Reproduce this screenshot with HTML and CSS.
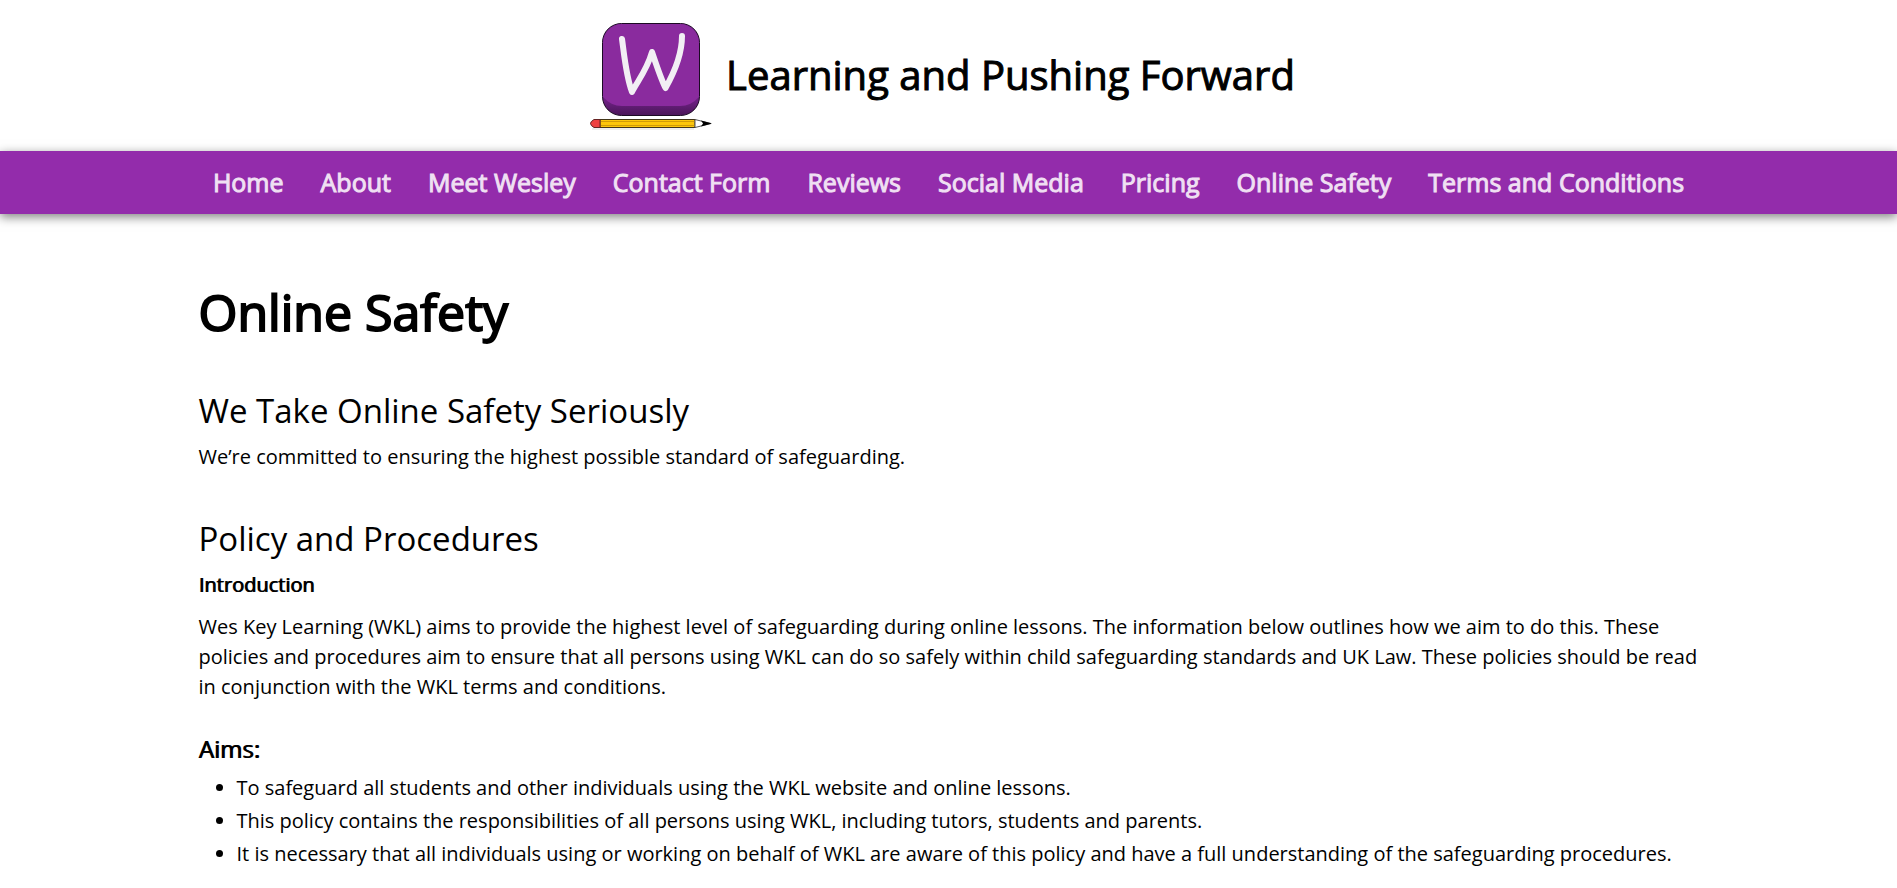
FILE: index.html
```html
<!DOCTYPE html>
<html lang="en">
<head>
<meta charset="utf-8">
<title>Online Safety - Wes Key Learning</title>
<link rel="stylesheet" href="styles.css">
</head>
<body>
<header class="site-header">
  <svg class="logo" viewBox="0 0 124 110" role="img" aria-label="Wes Key Learning logo">
    <defs>
      <linearGradient id="base" x1="0" y1="0" x2="0" y2="1">
        <stop offset="0.85" stop-color="#6b2080"/>
        <stop offset="1" stop-color="#4a1558"/>
      </linearGradient>
      <clipPath id="tile"><rect x="13" y="3" width="96" height="91" rx="19"/></clipPath>
    </defs>
    <rect x="12.500" y="2.500" width="97" height="92" rx="19" fill="url(#base)" stroke="#1c0a24" stroke-width="1"/>
    <path clip-path="url(#tile)" d="M13 0H109V76Q101 85 90 85H32Q21 85 13 76Z" fill="#8a2b9e"/>
    <path d="M32 18C34 32 36 55 42 71C47 61 57 49 62 31C66 43 71 58 75.500 67C84 52 92 35 92 15" fill="none" stroke="#f2eff4" stroke-width="6" stroke-linecap="round" stroke-linejoin="round"/>
    <path d="M2 108H104" stroke="#ddd" stroke-width="1"/>
    <path d="M10 98.500H105V106.500H10Z" fill="#fcc60a" stroke="#423619" stroke-width="1"/>
    <path d="M11 100.500H105M11 104.500H105" stroke="#cf9a08" stroke-width="1"/>
    <path d="M10 98.500H4Q-3 102.500 4 106.500H10Z" fill="#ee4040" stroke="#652323" stroke-width="1"/>
    <path d="M105 98.500L121 102.500L105 106.500Z" fill="#fff" stroke="#555" stroke-width="1"/>
    <path d="M111 99.500L122 102.500L111 105.500L113 102.500Z" fill="#000"/>
  </svg>
  <p class="tagline">Learning and Pushing Forward</p>
</header>
<nav class="site-nav" aria-label="Main">
  <a href="#">Home</a>
  <a href="#">About</a>
  <a href="#">Meet Wesley</a>
  <a href="#">Contact Form</a>
  <a href="#">Reviews</a>
  <a href="#">Social Media</a>
  <a href="#">Pricing</a>
  <a href="#">Online Safety</a>
  <a href="#">Terms and Conditions</a>
</nav>
<main class="content">
  <h1>Online Safety</h1>
  <section class="block">
    <h2>We Take Online Safety Seriously</h2>
    <p>We’re committed to ensuring the highest possible standard of safeguarding.</p>
  </section>
  <section class="block">
    <h2>Policy and Procedures</h2>
    <h3 class="intro-title">Introduction</h3>
    <p>Wes Key Learning (WKL) aims to provide the highest level of safeguarding during online lessons. The information below outlines how we aim to do this. These policies and procedures aim to ensure that all persons using WKL can do so safely within child safeguarding standards and UK Law. These policies should be read in conjunction with the WKL terms and conditions.</p>
    <h3 class="aims-title">Aims:</h3>
    <ul class="aims">
      <li>To safeguard all students and other individuals using the WKL website and online lessons.</li>
      <li>This policy contains the responsibilities of all persons using WKL, including tutors, students and parents.</li>
      <li>It is necessary that all individuals using or working on behalf of WKL are aware of this policy and have a full understanding of the safeguarding procedures.</li>
    </ul>
  </section>
</main>
</body>
</html>
```
FILE: styles.css
```css
* { box-sizing: border-box; }
body {
  margin: 0;
  background: #fff;
  color: #000;
  font-family: "Open Sans", sans-serif;
  font-size: 20px;
  line-height: 30px;
}
h1, h2, h3, p, ul { margin: 0; font-weight: 400; }

.site-header {
  display: flex;
  align-items: center;
  justify-content: center;
  gap: 12px;
  padding: 21px 20px 20px 8px;
}
.logo { width: 124px; height: 110px; }
.tagline {
  padding-bottom: 2px;
  font-size: 40px;
  line-height: 56px;
  -webkit-text-stroke: 1px currentColor;
}

.site-nav {
  display: flex;
  flex-wrap: wrap;
  justify-content: center;
  gap: 37px;
  padding: 14px 16px;
  background: #932cab;
  box-shadow: 0 3px 10px rgba(0, 0, 0, 0.5);
}
.site-nav a {
  color: #f0e0f3;
  font-size: 25px;
  line-height: 35px;
  text-decoration: none;
  -webkit-text-stroke: 1px currentColor;
}

.content {
  max-width: 1532px;
  margin: 0 auto;
  padding: 66px 16px 24px;
}
h1 {
  font-size: 50px;
  line-height: 64px;
  -webkit-text-stroke: 2px currentColor;
}
.block { padding-top: 36px; }
h2 {
  font-size: 33px;
  line-height: 62px;
}
h3 { text-shadow: 1px 0 currentColor; }
.intro-title {
  margin-bottom: 12px;
  font-size: 20px;
}
.aims-title {
  margin: 32px 0 9px;
  font-size: 24px;
}
.aims { padding-left: 38px; }
.aims li { margin-bottom: 3px; }
```
